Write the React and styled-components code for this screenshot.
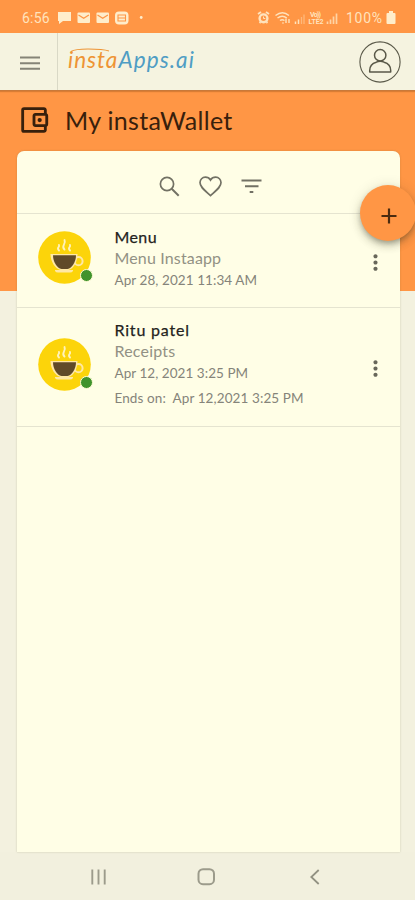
import React from "react";
import styled, { createGlobalStyle } from "styled-components";
import { MdOutlineAccountBalanceWallet, MdMoreVert } from "react-icons/md";

const Global = createGlobalStyle`
  * { box-sizing: border-box; }
  html, body { margin: 0; padding: 0; }
  body { font-family: Lato, "Open Sans", sans-serif; background: #f2f0de; overflow: hidden; }
  svg { display: block; flex: none; }
`;

const Screen = styled.div`
  width: 415px;
  height: 900px;
  display: flex;
  flex-direction: column;
  overflow: hidden;
  background: linear-gradient(#ff9645 0 291.5px, #f3f1df 291.5px);
`;

const StatusBar = styled.div`
  height: 33px;
  flex: none;
  display: flex;
  align-items: center;
  justify-content: space-between;
  padding: 2px 19px 0 22px;
  color: #ffe3bd;
  font-family: Roboto, sans-serif;
  font-size: 14px;
`;

const StatusGroup = styled.div`
  display: flex;
  align-items: center;
`;

const StatusText = styled.span`
  width: ${(p) => p.$width}px;
  padding-left: ${(p) => p.$indent || 0}px;
  letter-spacing: ${(p) => p.$spacing || 0}px;
  white-space: nowrap;
`;

const Header = styled.header`
  height: 58px;
  flex: none;
  display: flex;
  align-items: center;
  background: #f5f3e0;
  border-bottom: 1px solid #c8793a;
  box-shadow: 0 1px 1px rgba(150, 80, 20, 0.35);
`;

const MenuButton = styled.button`
  width: 58px;
  height: 57px;
  padding: 3px 0 0 20px;
  border: 0;
  border-right: 1px solid #d9d8c6;
  background: none;
`;

const Brand = styled.div`
  display: flex;
  flex-direction: column;
  margin: -4px auto 0 10px;
`;

const BrandName = styled.div`
  height: 24px;
  margin-top: -5px;
  line-height: 24px;
  font-size: 22.5px;
  font-style: italic;
  letter-spacing: 1.1px;
  color: #4f9dc4;
  white-space: nowrap;
`;

const BrandAccent = styled.span`
  color: #ee9434;
  letter-spacing: 1px;
`;

const ProfileBox = styled.div`
  margin-right: 14px;
`;

const Title = styled.h1`
  height: 60px;
  flex: none;
  margin: 0;
  padding: 0 0 2px 17px;
  display: flex;
  align-items: center;
  gap: 14px;
  font-size: 25px;
  font-weight: 400;
  letter-spacing: 0.3px;
  color: #38200c;
`;

const Card = styled.main`
  width: 383.5px;
  height: 701px;
  flex: none;
  margin-left: 16.5px;
  display: flex;
  flex-direction: column;
  position: relative;
  background: #fffee6;
  border-radius: 7px 7px 0 0;
  box-shadow: 0 0 2px rgba(90, 90, 50, 0.3);
`;

const Toolbar = styled.div`
  height: 63px;
  flex: none;
  display: flex;
  align-items: center;
  padding: 8px 0 0 142px;
  gap: 19px;
  color: #727164;
  border-bottom: 1px solid #e5e4d0;
`;

const Fab = styled.button`
  position: absolute;
  top: 34px;
  left: 343px;
  width: 56px;
  height: 56px;
  padding: 6px 0 0 3px;
  border: 0;
  border-radius: 50%;
  display: grid;
  place-items: center;
  color: #4a2b10;
  background: #ff9645;
  box-shadow: 0 3px 5px -1px rgba(50, 50, 30, 0.3), 0 5px 9px rgba(50, 50, 30, 0.2), 0 1px 14px rgba(50, 50, 30, 0.12);
`;

const Row = styled.article`
  height: ${(p) => p.$height}px;
  flex: none;
  display: flex;
  align-items: flex-start;
  border-bottom: 1px solid #e5e4d0;
`;

const Avatar = styled.div`
  position: relative;
  flex: none;
  width: 53px;
  height: 53px;
  margin: ${(p) => p.$top}px 24px 0 21px;
`;

const Presence = styled.i`
  position: absolute;
  left: 42px;
  top: 38px;
  width: 13px;
  height: 13px;
  border-radius: 50%;
  border: 1px solid #fffbd5;
  background: #40932c;
`;

const Details = styled.div`
  flex: 1;
  padding-top: ${(p) => p.$top}px;
  white-space: pre;
`;

const Name = styled.div`
  height: 21px;
  line-height: 22px;
  font-size: 16px;
  -webkit-text-stroke: 0.25px #24231d;
  letter-spacing: ${(p) => p.$spacing}px;
  color: #24231d;
`;

const Category = styled.div`
  height: 22px;
  line-height: 22px;
  font-size: 16px;
  letter-spacing: ${(p) => p.$spacing}px;
  color: #929184;
`;

const DateLine = styled.div`
  height: ${(p) => p.$height || 22}px;
  line-height: ${(p) => p.$height || 22}px;
  font-size: 13.5px;
  letter-spacing: ${(p) => p.$spacing}px;
  color: #85847a;
`;

const MoreButton = styled.button`
  flex: none;
  margin: ${(p) => p.$top}px 12px 0 0;
  padding: 0;
  border: 0;
  background: none;
  color: #68675a;
`;

const NavBar = styled.nav`
  flex: 1;
  display: flex;
  align-items: center;
  padding: 2px 0 0 91px;
  background: #f2f0de;
`;

const NavItem = styled.div`
  width: ${(p) => p.$width}px;
`;

const StatusIconsLeft = () => (
  <svg width="88" height="16" viewBox="58 9 88 16" fill="#ffedcb">
    <path d="M58 11h13v9h-8l-4 3v-3h-1z" />
    {[77.5, 96.5].map((x) => (
      <g key={x}>
        <rect x={x} y="11.5" width="12.5" height="10.5" rx="1" />
        <path d={`M${x + 1} 14l5.2 3.2 5.2-3.2`} fill="none" stroke="#ff9645" strokeWidth="1.3" />
      </g>
    ))}
    <rect x="115" y="10.5" width="13.5" height="13" rx="4" />
    <path d="M118 14h7.5v6H118zM118 17h7.5" fill="none" stroke="#ff9645" strokeWidth="1.1" />
    <circle cx="141.2" cy="16.5" r="1.4" />
  </svg>
);

const StatusIconsRight = () => (
  <svg width="84" height="16" viewBox="256 9 84 16" fill="none" stroke="#ffe3bd">
    <circle cx="263.5" cy="17.3" r="3.9" strokeWidth="2.4" />
    <path d="M258 13l3-2M269 13l-3-2M259.5 22l1-1M267.5 22l-1-1" strokeWidth="1.8" />
    <path d="M263.5 15.5v2h1.8" strokeWidth="1" />
    <path d="M275.5 14.5q7-5.5 13.5 0M277.5 17q4.8-3.5 9.3 0M280 19.5q2.2-1.6 4.5 0" strokeWidth="1.4" />
    <path d="M282.5 21.5l1 1M286 17.5v4.5M289 18v4" strokeWidth="1.4" />
    <path d="M295.5 20.5v2.5M298.5 18.5v4.5" strokeWidth="1.5" />
    <path d="M301.500 16v7M304 13.500v9.500" strokeWidth="1.3" opacity=".45" />
    <path d="M327.500 20.500v2.500M330.500 18.500v4.500M333.500 15.500v7.500M336.500 12.500v10.500" strokeWidth="1.7" opacity=".8" />
    <g fill="#ffe3bd" stroke="none" fontFamily="Roboto, sans-serif" fontWeight="700">
      <text x="310" y="16" fontSize="7" textLength="11">Vo))</text>
      <text x="308.5" y="23" fontSize="7" textLength="15">LTE2</text>
    </g>
  </svg>
);

const BatteryIcon = () => (
  <svg width="10" height="14" viewBox="0 0 10 14" fill="#ffedcb">
    <path d="M3 0h4v2h1.5q1 0 1 1v9q0 1-1 1h-7q-1 0-1-1V3q0-1 1-1H3z" />
  </svg>
);

const HamburgerIcon = () => (
  <svg width="20" height="14" viewBox="0 0 20 14" stroke="#858477" strokeWidth="2.1">
    <path d="M0 1.5h20M0 7.2h20M0 12.8h20" />
  </svg>
);

const BrandSwoosh = () => (
  <svg width="44" height="5" viewBox="0 0 44 5" fill="none" stroke="#ee9434" strokeWidth="1.1">
    <path d="M3 3.500C7 1 13 1 20 1C29 1 36 1.300 41 3" />
  </svg>
);

const ProfileIcon = () => (
  <svg width="42" height="42" viewBox="0 0 42 42" fill="none" stroke="#595848">
    <circle cx="21" cy="21" r="20.1" strokeWidth="1.1" />
    <circle cx="21.2" cy="14.3" r="5.7" strokeWidth="1.500" />
    <path d="M10.7 31v-1.500c0-4.400 2.800-7.300 6.600-8.300q3.900-2 7.800 0c3.800 1 6.600 3.900 6.600 8.300V31z" strokeWidth="1.500" strokeLinejoin="round" />
  </svg>
);

const SearchIcon = () => (
  <svg width="21" height="21" viewBox="0 0 21 21" fill="none" stroke="currentColor">
    <circle cx="8" cy="8" r="6.600" strokeWidth="1.700" />
    <path d="M12.700 12.700l7 7" strokeWidth="2" />
  </svg>
);

const HeartIcon = () => (
  <svg width="23" height="21" viewBox="0 0 23 21" fill="none" stroke="currentColor" strokeWidth="1.700">
    <path d="M11.500 19.600C5.500 14.200 1 11 1 6.600C1 3.500 3.400 1.200 6.300 1.200C8.500 1.200 10.400 2.300 11.500 4.100C12.600 2.300 14.500 1.200 16.700 1.200C19.600 1.200 22 3.500 22 6.600C22 11 17.500 14.200 11.500 19.600z" />
  </svg>
);

const FilterIcon = () => (
  <svg width="21" height="15" viewBox="0 0 21 15" stroke="currentColor" strokeWidth="1.900">
    <path d="M.5 1.500h20M4 7.300h13.500M8.700 13h3.600" />
  </svg>
);

const PlusIcon = () => (
  <svg width="16" height="16" viewBox="0 0 16 16" stroke="currentColor" strokeWidth="2.200">
    <path d="M8 .5v15M.5 8h15" />
  </svg>
);

const CoffeeIcon = () => (
  <svg width="53" height="53" viewBox="0 0 53 53">
    <circle cx="26.5" cy="26.5" r="26.3" fill="#fcd40a" />
    <path d="M12.500 23h27c0 8-4 15-9 16h-8c-5-1-10-8-10-16z" fill="#ffe8a4" />
    <circle cx="40.500" cy="30.200" r="4.100" fill="none" stroke="#ffe8a4" strokeWidth="2" />
    <path d="M15 24.200h23c0 6.500-4 13-8.500 13.800h-6c-4.500-.8-8.500-7.300-8.500-13.800z" fill="#604a28" />
    <path d="M17 39h18v1q-1 1.500-3 1.500H20q-2 0-3-1.500z" fill="#ffe8a4" />
    <path d="M21 19.500c-3-3 1-3 0-5.500M26.500 18.500c-4-4 2-5 0-9.500M32 19.500c-3-3 1-3 0-5.500" fill="none" stroke="#fff2bc" strokeWidth="1.900" strokeLinecap="round" />
  </svg>
);

const RecentsIcon = () => (
  <svg width="16" height="16" viewBox="0 0 16 16" stroke="#9c9b8b" strokeWidth="1.900">
    <path d="M1.300 .5v15M7.500 .5v15M13.700 .5v15" />
  </svg>
);

const HomeIcon = () => (
  <svg width="18" height="18" viewBox="0 0 18 18" fill="none" stroke="#9c9b8b" strokeWidth="2">
    <rect x="1.500" y="1.200" width="15.500" height="15" rx="4.500" />
  </svg>
);

const BackIcon = () => (
  <svg width="10" height="16" viewBox="0 0 10 16" fill="none" stroke="#929182" strokeWidth="1.800">
    <path d="M8.700 1L1.300 8l7.400 7" />
  </svg>
);

const entries = [
  {
    name: "Menu", nameSpacing: 0.4, category: "Menu Instaapp", categorySpacing: 0.15,
    date: "Apr 28, 2021 11:34 AM", dateSpacing: 0.07, height: 93.5, textTop: 12, avatarTop: 17, moreTop: 36,
  },
  {
    name: "Ritu patel", nameSpacing: 0.8, category: "Receipts", categorySpacing: 0.2,
    date: "Apr 12, 2021 3:25 PM", dateSpacing: 0.05,
    ends: "Ends on:  Apr 12,2021 3:25 PM", endsSpacing: 0.1, height: 119.5, textTop: 11, avatarTop: 30, moreTop: 48.5,
  },
];

export default function App() {
  return (
    <>
      <Global />
      <Screen>
        <StatusBar>
          <StatusGroup>
            <StatusText $width={36} $spacing={0.2}>6:56</StatusText>
            <StatusIconsLeft />
          </StatusGroup>
          <StatusGroup>
            <StatusIconsRight />
            <StatusText $width={46} $indent={6} $spacing={0.7}>100%</StatusText>
            <BatteryIcon />
          </StatusGroup>
        </StatusBar>
        <Header>
          <MenuButton aria-label="Open menu"><HamburgerIcon /></MenuButton>
          <Brand>
            <BrandSwoosh />
            <BrandName><BrandAccent>insta</BrandAccent>Apps.ai</BrandName>
          </Brand>
          <ProfileBox><ProfileIcon /></ProfileBox>
        </Header>
        <Title>
          <MdOutlineAccountBalanceWallet size={34} />
          My instaWallet
        </Title>
        <Card>
          <Toolbar>
            <SearchIcon />
            <HeartIcon />
            <FilterIcon />
          </Toolbar>
          {entries.map((e) => (
            <Row key={e.name} $height={e.height}>
              <Avatar $top={e.avatarTop}>
                <CoffeeIcon />
                <Presence />
              </Avatar>
              <Details $top={e.textTop}>
                <Name $spacing={e.nameSpacing}>{e.name}</Name>
                <Category $spacing={e.categorySpacing}>{e.category}</Category>
                <DateLine $spacing={e.dateSpacing}>{e.date}</DateLine>
                {e.ends && <DateLine $height={29} $spacing={e.endsSpacing}>{e.ends}</DateLine>}
              </Details>
              <MoreButton $top={e.moreTop} aria-label="More"><MdMoreVert size={25} /></MoreButton>
            </Row>
          ))}
          <Fab aria-label="Add"><PlusIcon /></Fab>
        </Card>
        <NavBar>
          <NavItem $width={106}><RecentsIcon /></NavItem>
          <NavItem $width={113}><HomeIcon /></NavItem>
          <NavItem $width={10}><BackIcon /></NavItem>
        </NavBar>
      </Screen>
    </>
  );
}
